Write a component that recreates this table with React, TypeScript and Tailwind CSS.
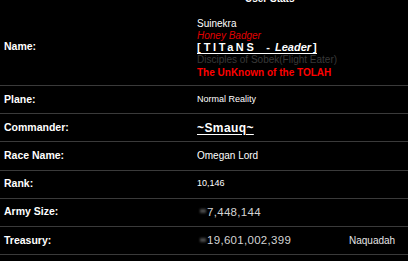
import type { ReactNode } from "react";

type Row = {
  label: string;
  value: ReactNode;
};

// faint ghost mark the game prints in front of big numbers
const Ghost = () => (
  <span className="mr-[1px] inline-block h-[4px] w-[6px] translate-y-[-1px] bg-[#4a4a4a] blur-[1.2px]" />
);

const rows: Row[] = [
  {
    label: "Plane:",
    value: <span className="text-[9px] text-white">Normal Reality</span>,
  },
  {
    label: "Commander:",
    value: (
      <span className="text-[12px] font-bold tracking-[0.4px] text-white underline underline-offset-2">
        ~Smauq~
      </span>
    ),
  },
  {
    label: "Race Name:",
    value: <span className="text-[10px] text-white">Omegan Lord</span>,
  },
  {
    label: "Rank:",
    value: <span className="text-[9px] text-white">10,146</span>,
  },
  {
    label: "Army Size:",
    value: (
      <span className="flex items-center pl-[3px] text-[11.5px] tracking-[0.3px] text-[#d4d4d4]">
        <Ghost />
        7,448,144
      </span>
    ),
  },
  {
    label: "Treasury:",
    value: (
      <span className="flex items-center">
        <span className="flex w-[152px] items-center pl-[3px] text-[11.5px] tracking-[0.3px] text-[#d4d4d4]">
          <Ghost />
          19,601,002,399
        </span>
        <span className="text-[10px] text-[#e5e5e5]">Naquadah</span>
      </span>
    ),
  },
];

export default function App() {
  return (
    <main
      className="h-[261px] w-[408px] overflow-hidden bg-black text-white"
      style={{ fontFamily: '"Liberation Sans", Arial, sans-serif' }}
    >
      {/* Header, mostly scrolled off the top */}
      <div className="-mt-[7px] h-[15px] pl-[245px] text-[10px] font-bold leading-[12px]">
        User Stats
      </div>

      {/* Name row */}
      <div className="grid h-[78px] grid-cols-[197px_1fr] border-b border-[#3a3a3a]">
        <div className="flex items-center pl-[4px] text-[10.5px] font-bold">
          Name:
        </div>
        <div className="flex flex-col pt-[10px] text-[10px] leading-[12px]">
          <span className="text-white">Suinekra</span>
          <span className="italic text-[#e00000]">Honey Badger</span>
          <span className="h-[12px] text-[11px] font-bold leading-[11px] text-white">
            <span className="inline-flex border-b border-white">
              <span>[</span>
              <span className="ml-[3px] tracking-[2.6px]">TITaNS</span>
              <span className="ml-[10px] mr-[5px]">-</span>
              <span className="italic">Leader</span>
              <span className="ml-[2px]">]</span>
            </span>
          </span>
          <span className="leading-[12.5px] text-[#383838]">
            Disciples of Sobek(Flight Eater)
          </span>
          <span className="leading-[12px] font-bold text-[#ff0000]">
            The UnKnown of the TOLAH
          </span>
        </div>
      </div>

      {rows.map((r) => (
        <div
          key={r.label}
          className="grid h-[28.2px] grid-cols-[197px_1fr] border-b border-[#3a3a3a]"
        >
          <div className="flex items-center pl-[4px] text-[10.5px] font-bold">
            {r.label}
          </div>
          <div className="flex items-center">{r.value}</div>
        </div>
      ))}
    </main>
  );
}
